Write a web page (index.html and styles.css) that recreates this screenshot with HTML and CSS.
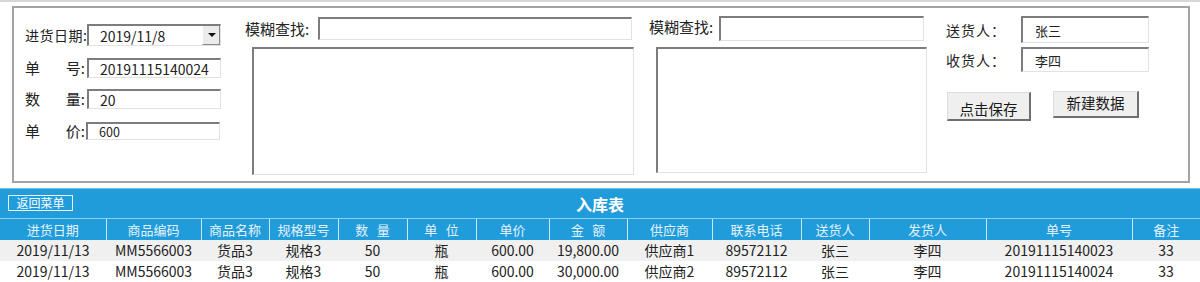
FILE: index.html
```html
<!DOCTYPE html>
<html lang="zh-CN">
<head>
    <meta charset="UTF-8">
    <meta name="viewport" content="width=device-width, initial-scale=1.0">
    <title>入库表</title>
    <link rel="stylesheet" href="styles.css">
</head>
<body>
    <div class="topline"></div>
    <div class="frame">
        <!-- 左侧: 基本信息 -->
        <div class="col-info">
            <div class="row row-date">
                <span class="label date-label">进货日期:</span>
                <div class="combo">
                    <span class="combo-text">2019/11/8</span>
                    <span class="combo-btn"></span>
                </div>
            </div>
            <div class="row row-no">
                <span class="label spread"><span>单</span><span>号:</span></span>
                <input class="field" type="text" value="20191115140024">
            </div>
            <div class="row row-qty">
                <span class="label spread"><span>数</span><span>量:</span></span>
                <input class="field" type="text" value="20">
            </div>
            <div class="row row-price">
                <span class="label spread"><span>单</span><span>价:</span></span>
                <input class="field small" type="text" value="600">
            </div>
        </div>

        <!-- 模糊查找 1 -->
        <div class="col-search search1">
            <div class="search-row">
                <span class="search-label">模糊查找:</span>
                <input class="field search-input" type="text">
            </div>
            <div class="list-box"></div>
        </div>

        <!-- 模糊查找 2 -->
        <div class="col-search search2">
            <div class="search-row">
                <span class="search-label">模糊查找:</span>
                <input class="field search-input" type="text">
            </div>
            <div class="list-box"></div>
        </div>

        <!-- 右侧: 人员 + 按钮 -->
        <div class="col-person">
            <div class="person-row first">
                <span class="person-label">送货人：</span>
                <input class="field person-input" type="text" value="张三">
            </div>
            <div class="person-row second">
                <span class="person-label">收货人：</span>
                <input class="field person-input" type="text" value="李四">
            </div>
            <div class="actions">
                <button class="btn btn-save">点击保存</button>
                <button class="btn btn-new">新建数据</button>
            </div>
        </div>
    </div>

    <div class="panel">
        <div class="panel-bar">
            <button class="back-btn">返回菜单</button>
            <div class="panel-title">入库表</div>
        </div>
        <table class="grid">
            <colgroup>
                <col class="c1"><col class="c2"><col class="c3"><col class="c4"><col class="c5">
                <col class="c6"><col class="c7"><col class="c8"><col class="c9"><col class="c10">
                <col class="c11"><col class="c12"><col class="c13"><col class="c14">
            </colgroup>
            <thead>
                <tr>
                    <th>进货日期</th><th>商品编码</th><th>商品名称</th><th>规格型号</th><th>数&nbsp;&nbsp;&nbsp;量</th>
                    <th>单&nbsp;&nbsp;&nbsp;位</th><th>单价</th><th>金&nbsp;&nbsp;&nbsp;额</th><th>供应商</th><th>联系电话</th>
                    <th>送货人</th><th>发货人</th><th>单号</th><th>备注</th>
                </tr>
            </thead>
            <tbody>
                <tr>
                    <td>2019/11/13</td><td>MM5566003</td><td>货品3</td><td>规格3</td><td>50</td>
                    <td>瓶</td><td>600.00</td><td>19,800.00</td><td>供应商1</td><td>89572112</td>
                    <td>张三</td><td>李四</td><td>20191115140023</td><td>33</td>
                </tr>
                <tr>
                    <td>2019/11/13</td><td>MM5566003</td><td>货品3</td><td>规格3</td><td>50</td>
                    <td>瓶</td><td>600.00</td><td>30,000.00</td><td>供应商2</td><td>89572112</td>
                    <td>张三</td><td>李四</td><td>20191115140024</td><td>33</td>
                </tr>
            </tbody>
        </table>
    </div>
</body>
</html>
```

FILE: styles.css
```css
*{
    margin: 0;
    padding: 0;
    box-sizing: border-box;
    font-family: 'Noto Sans CJK SC', 'Noto Sans', sans-serif;
}
body{
    width: 1200px;
    height: 282px;
    overflow: hidden;
    background: #fff;
    color: #222;
}
.topline{
    height: 2px;
    background: #d6d6d6;
}

/* ---------------- top form frame ---------------- */
.frame{
    display: flex;
    align-items: flex-start;
    margin: 4px 10px 0 12px;
    height: 177px;
    border: 2px solid #a3a3a3;
    padding: 9px 0 0 11px;
}
.field{
    display: block;
    outline: none;
    background: #fff;
    border-top: 2px solid #7d7d7d;
    border-left: 2px solid #7d7d7d;
    border-right: 1px solid #e2e2e2;
    border-bottom: 1px solid #e2e2e2;
    font-size: 14px;
    color: #222;
    padding-left: 11px;
}
.field.small{
    font-size: 12.5px;
}

.col-info{
    width: 196px;
    margin-top: 7px;
}
.row{
    display: flex;
    align-items: center;
}
.label{
    width: 62px;
    font-size: 15px;
    line-height: 20px;
    white-space: nowrap;
    flex-shrink: 0;
}
.label.date-label{
    font-size: 14px;
    letter-spacing: 0.5px;
}
.label.spread{
    display: flex;
    justify-content: space-between;
    padding-right: 2px;
}
.row .field{
    width: 134px;
    height: 20px;
}
.row-no{
    margin-top: 12px;
}
.row-qty{
    margin-top: 11px;
}
.row-price{
    margin-top: 12px;
}
.row-price .field{
    height: 18px;
    margin-left: -1px;
}
.combo{
    display: flex;
    align-items: center;
    width: 135px;
    height: 22px;
    border-top: 2px solid #7d7d7d;
    border-left: 2px solid #7d7d7d;
    border-right: 1px solid #e2e2e2;
    border-bottom: 1px solid #e2e2e2;
    background: #fff;
}
.combo-text{
    flex: 1;
    font-size: 14px;
    padding-left: 11px;
}
.combo-btn{
    position: relative;
    width: 18px;
    height: 100%;
    background: #ececec;
    border-left: 1px solid #fff;
    border-bottom: 1px solid #8a8a8a;
    border-right: 1px solid #8a8a8a;
}
.combo-btn::after{
    content: '';
    position: absolute;
    left: 5px;
    top: 7px;
    border-left: 4px solid transparent;
    border-right: 4px solid transparent;
    border-top: 4px solid #111;
}

/* ---------------- fuzzy search ---------------- */
.col-search{
    display: flex;
    flex-direction: column;
}
.search-row{
    display: flex;
    align-items: center;
}
.search-label{
    font-size: 15px;
    line-height: 20px;
    white-space: nowrap;
}
.search1{
    margin-left: 24px;
}
.search1 .search-label{
    width: 73px;
}
.search1 .search-input{
    width: 314px;
    height: 23px;
}
.search1 .list-box{
    margin: 7px 0 0 7px;
    width: 382px;
    height: 128px;
}
.search2{
    margin-left: 15px;
    margin-top: -1px;
}
.search2 .search-label{
    width: 70px;
    margin-top: -4px;
}
.search2 .search-input{
    width: 205px;
    height: 25px;
}
.search2 .list-box{
    margin: 6px 0 0 7px;
    width: 271px;
    height: 126px;
}
.list-box{
    background: #fff;
    border-top: 2px solid #7d7d7d;
    border-left: 2px solid #7d7d7d;
    border-right: 1px solid #e2e2e2;
    border-bottom: 1px solid #e2e2e2;
}

/* ---------------- persons + buttons ---------------- */
.col-person{
    margin-left: 19px;
    margin-top: -1px;
}
.person-row{
    display: flex;
    align-items: center;
}
.person-row.second{
    margin-top: 4px;
}
.person-label{
    width: 75px;
    font-size: 14px;
    line-height: 20px;
    letter-spacing: 1px;
}
.person-input{
    width: 128px;
    font-size: 13px;
    padding-left: 12px;
}
.first .person-input{
    height: 27px;
}
.second .person-input{
    height: 25px;
}
.actions{
    display: flex;
    align-items: flex-start;
    margin-top: 19px;
    margin-left: 1px;
}
.btn{
    background: #efefef;
    color: #1a1a1a;
    font-size: 14.5px;
    border-top: 1px solid #dcdcdc;
    border-left: 1px solid #dcdcdc;
    border-right: 2px solid #6e6e6e;
    border-bottom: 2px solid #6e6e6e;
}
.btn-save{
    width: 84px;
    height: 29px;
    margin-top: 1px;
    padding-top: 4px;
}
.btn-new{
    width: 86px;
    height: 27px;
    margin-left: 22px;
    padding-bottom: 3px;
}

/* ---------------- table panel ---------------- */
.panel{
    margin-top: 5px;
    background: #219cdb;
    border-top: 1px solid #6cc3ee;
}
.panel-bar{
    position: relative;
    height: 29px;
    display: flex;
    align-items: center;
    justify-content: center;
}
.back-btn{
    position: absolute;
    left: 8px;
    top: 6px;
    width: 65px;
    height: 16px;
    background: transparent;
    border: 1px solid #e8f5fc;
    color: #fff;
    font-size: 12px;
    line-height: 14px;
}
.panel-title{
    color: #fff;
    font-size: 16px;
    font-weight: bold;
    line-height: 20px;
    margin-top: 1px;
}
.grid{
    width: 1200px;
    border-collapse: collapse;
    table-layout: fixed;
}
.c1{ width: 106px; }
.c2{ width: 95px; }
.c3{ width: 68px; }
.c4{ width: 69px; }
.c5{ width: 69px; }
.c6{ width: 69px; }
.c7{ width: 73px; }
.c8{ width: 78px; }
.c9{ width: 85px; }
.c10{ width: 89px; }
.c11{ width: 68px; }
.c12{ width: 117px; }
.c13{ width: 146px; }
.c14{ width: 68px; }
.grid th{
    height: 21px;
    font-weight: normal;
    font-size: 13px;
    line-height: 19px;
    color: #e4f2fb;
    border-top: 1px solid #8fd0f0;
    border-left: 1px solid #c8e8f8;
    text-align: center;
    white-space: nowrap;
}
.grid th:first-child{
    border-left: none;
}
.grid td{
    height: 21px;
    font-size: 14px;
    line-height: 20px;
    color: #222;
    text-align: center;
    white-space: nowrap;
    background: #fff;
}
.grid tbody tr:first-child td{
    background: #f0f0f0;
}
```
